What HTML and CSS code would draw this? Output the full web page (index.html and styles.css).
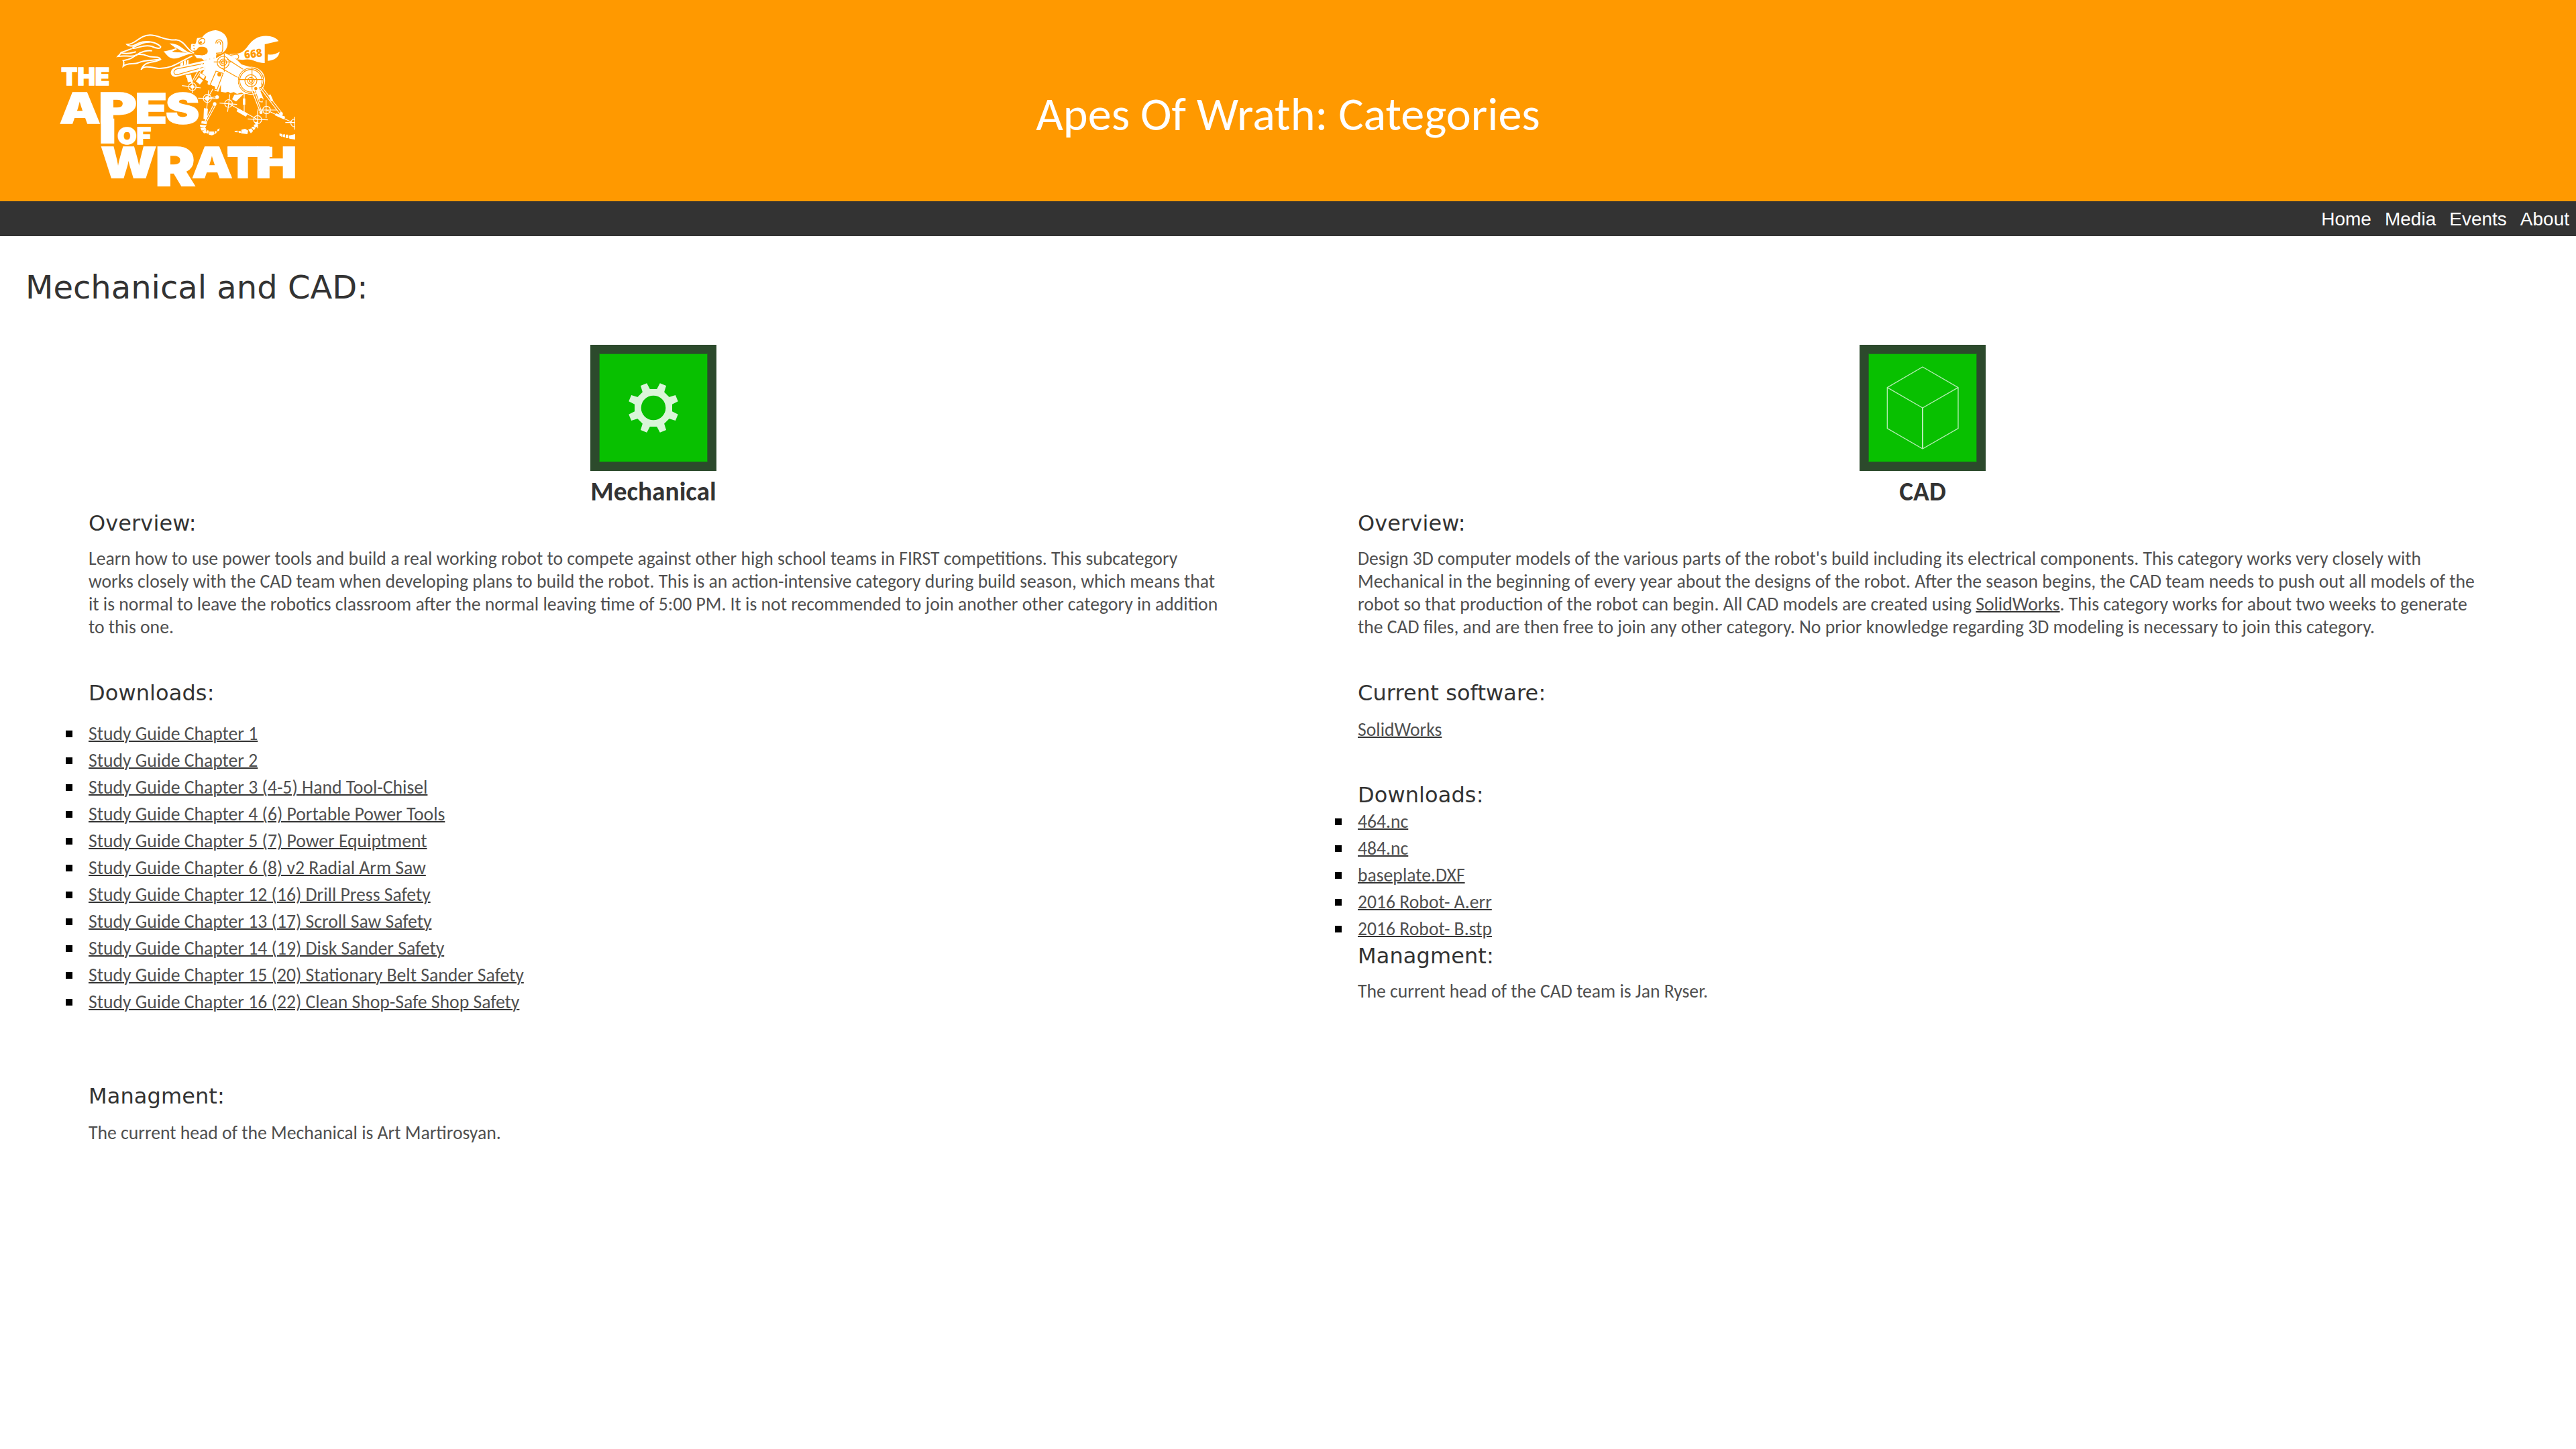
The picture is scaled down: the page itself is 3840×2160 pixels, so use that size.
FILE: index.html
```html
<!DOCTYPE html>
<html lang="en">
<head>
<meta charset="utf-8">
<title>Apes Of Wrath: Categories</title>
<link rel="stylesheet" href="styles.css">
</head>
<body>
<header class="banner">
  <svg class="logo" viewBox="0 0 1260 840" role="img" aria-label="The Apes of Wrath">
    <g class="word">
      <text x="94" y="321" font-size="107" textLength="216" lengthAdjust="spacingAndGlyphs">THE</text>
      <text x="86" y="493" font-size="190" textLength="183" lengthAdjust="spacingAndGlyphs">A</text>
      <text x="260" y="491" font-size="190" textLength="172" lengthAdjust="spacingAndGlyphs">P</text>
      <text x="424" y="493" font-size="184" textLength="144" lengthAdjust="spacingAndGlyphs">E</text>
      <text x="560" y="493" font-size="184" textLength="152" lengthAdjust="spacingAndGlyphs">S</text>
      <text x="346" y="584" font-size="104" textLength="150" lengthAdjust="spacingAndGlyphs">OF</text>
      <text x="270" y="736" font-size="190" textLength="250" lengthAdjust="spacingAndGlyphs">W</text>
      <text x="514" y="770" font-size="238" textLength="180" lengthAdjust="spacingAndGlyphs">R</text>
      <text x="678" y="736" font-size="190" textLength="182" lengthAdjust="spacingAndGlyphs">A</text>
      <text x="834" y="736" font-size="190" textLength="144" lengthAdjust="spacingAndGlyphs">T</text>
      <text x="962" y="736" font-size="190" textLength="186" lengthAdjust="spacingAndGlyphs">H</text>
    </g>
    <!-- long stem and joined crossbar -->
    <path class="fill" d="M271 470h60v112h-60zM838 596h200v46h-200z"/>
    <!-- flame breath -->
    <g class="line flame">
      <path d="M688 176C655 168 650 122 606 118C560 124 530 96 490 97C440 98 430 138 388 139C400 152 425 142 440 133C480 118 520 130 538 148C540 160 520 158 498 147C460 136 440 158 412 156"/>
      <path d="M412 152C440 146 450 126 490 128M410 157C395 162 375 172 362 174C358 184 350 188 347 192C380 186 400 196 428 188C450 170 480 164 500 167"/>
      <path d="M362 176C390 184 410 176 428 172M430 184C410 205 385 208 371 211C378 222 372 228 371 236C390 218 420 230 440 220C470 205 510 212 538 205C530 188 500 200 480 190C465 184 445 182 430 184"/>
      <path d="M538 205C510 225 470 206 451 252C462 232 490 240 530 246C590 248 625 215 680 190"/>
    </g>
    <path class="fill" d="M690 178C640 178 640 136 578 134C588 142 600 150 606 156C590 162 570 166 551 170C566 182 570 200 600 202C625 202 650 182 690 178z"/>
    <path class="hole" d="M658 176C630 172 620 160 600 150L612 160L590 170C610 176 630 174 658 176z"/>
    <!-- far arm and wrench -->
    <path class="fill" d="M845 182L880 180C925 172 925 135 962 113C995 92 1050 98 1066 124L1004 138V222C960 222 950 198 905 208L870 204z"/>
    <path class="fill" d="M1018 184C1040 186 1058 180 1071 171C1066 195 1050 210 1017 212z"/>
    <path class="cut" d="M850 187L878 183C892 186 890 204 876 205L862 201"/>
    <text class="number" x="912" y="198" font-size="50" textLength="80" lengthAdjust="spacingAndGlyphs" transform="rotate(-7 950 180)">668</text>
    <path class="fill" d="M735 211L606 240C575 250 578 284 606 284L735 252z"/>
    <path class="cut" d="M732 224L612 248C592 254 594 276 612 274L732 240"/>
    <path class="fill" d="M626 224l12-8l2 16l-14 5zM642 214l8-5l4 20l-12 3zM656 210l7-3v20l-6 3z"/>
    <path class="line thin" d="M726 220L676 310M738 228L690 300M668 276L680 318"/>
    <path class="fill" d="M650 276l24-2l2 10l-22 4zM656 286l20-4l4 22l-20 4zM716 266l22 14l-8 14l-18-14zM710 286l18 14l-14 18l-18-14z"/>
    <!-- torso -->
    <path class="fill" d="M734 210L790 198L826 178L850 188L880 208L900 228L940 240L992 262L1004 300L975 345L912 362L900 354L880 360L866 352L850 356L840 350L828 354L808 350V318L796 350L780 345L768 320L757 322L748 316L750 304L738 296L742 282L724 268L736 250z"/>
    <!-- head -->
    <path class="fill" d="M724 108C735 88 765 75 785 75C815 78 838 100 838 132C838 152 828 172 808 180L788 182L785 202L776 198L770 212L758 202L752 214L742 206L732 210L722 202L700 200L688 184C720 188 745 190 749 172C750 152 735 147 712 150C704 152 702 164 694 166L680 167L673 158C676 150 672 140 678 136L692 137C700 132 696 120 702 110z"/>
    <path class="cut" d="M706 130C712 110 735 105 736 122C736 134 722 142 708 136M785 134C786 114 812 112 816 134V162L812 176L786 178M792 134C798 120 808 126 806 140"/>
    <path class="hole" d="M690 184C710 176 720 164 732 152C752 156 750 190 720 187zM680 145l8-4l2 7zM683 158l8-3v6zM706 132l14-10l4 10l-12 5z"/>
    <!-- joints -->
    <g class="cut">
      <circle cx="818" cy="219" r="27"/><circle cx="818" cy="219" r="15"/><circle cx="818" cy="219" r="7"/>
      <path d="M776 217H860M823 180V260M836 204L914 254M808 244L890 290"/>
      <circle cx="942" cy="301" r="57"/><circle cx="942" cy="301" r="50"/><circle cx="942" cy="301" r="27"/><circle cx="942" cy="301" r="15"/><circle cx="942" cy="301" r="7"/>
      <path d="M886 296H996M947 244V352"/>
      <path d="M786 258L818 268L790 342L754 332z"/>
    </g>
    <circle class="line thin" cx="943" cy="301" r="61"/>
    <circle class="hole" cx="801" cy="273" r="9"/><circle class="hole" cx="773" cy="333" r="9"/>
    <g class="line thin">
      <circle cx="680" cy="328" r="17"/><path d="M634 323L718 333M680 300V356"/>
      <circle cx="747" cy="380" r="18"/><path d="M706 379L792 381M753 344L744 430M772 338L754 370M747 380L790 372"/>
      <circle cx="842" cy="403" r="17"/><path d="M802 401L880 407M838 440L848 362"/>
      <circle cx="1012" cy="432" r="17"/><path d="M970 432L1058 432M1010 468V388"/>
      <circle cx="972" cy="475" r="18"/><path d="M928 472L1018 476M972 436V514"/>
      <path d="M1138 472A17 17 0 0 0 1138 507M1096 488H1140M1138 462V520"/>
      <path d="M777 405L736 484M785 408L744 484M740 470L735 490M842 403L972 475M912 362V440"/>
      <path d="M942 334L984 442M952 330L990 440M984 334L1072 450M992 330L1080 444M1012 432L1128 488"/>
    </g>
    <g class="fill">
      <circle cx="680" cy="328" r="8"/><circle cx="747" cy="380" r="10"/>
      <path d="M868 364L910 360L876 394L858 384zM732 424L750 426L746 474L730 472zM884 424L928 448L920 462L878 438zM906 380h11v28h-11zM958 332L976 326L998 380L994 398L980 396zM1020 366l10-4l12 28l-10 4zM1054 446L1096 462L1090 474L1050 456z"/>
      <circle cx="791" cy="374" r="8"/><circle cx="780" cy="405" r="8"/><circle cx="980" cy="322" r="9"/><circle cx="987" cy="443" r="7"/><circle cx="1077" cy="449" r="8"/>
      <path d="M722 480L746 484L744 496L720 492zM714 498L744 500L738 510L716 508zM716 512l20-2l8 8l-22 6zM724 526l16-6l4 14l-12 2zM744 522l10 2l-2 14l-8-2zM756 528h20l4 12l-12 5l-14-3zM780 526l10 2l-4 10l-6-2zM792 520l10-6l-2 10l-8 4z"/>
      <path d="M868 526l14-2l2 8l-12-1zM886 526h10l2 8l-10 1zM900 520l16-4l14 8l-4 16l-28-4zM930 520l14-6l8 12l-10 10zM944 508l12-2l6 10l-8 6zM954 498l16-4l4 10l-14 8zM960 486l14-2l2 8l-14 4z"/>
      <path d="M1070 536l12 4l-2 12l-10-6zM1084 542l10-2l2 14l-12-2zM1098 542h10l2 16h-12zM1112 546l28-6v24l-26-4z"/>
    </g>
    <circle class="hole" cx="964" cy="336" r="7"/><circle class="hole" cx="988" cy="386" r="8"/>
  </svg>
  <h1 class="site-title">Apes Of Wrath: Categories</h1>
</header>
<nav class="menu">
  <a>Home</a><a>Media</a><a>Events</a><a>About</a>
</nav>
<main>
  <h2 class="section-title">Mechanical and CAD:</h2>
  <div class="categories">
    <section class="category">
      <svg class="tile" viewBox="0 0 564 564" aria-hidden="true">
        <rect class="tile-edge" width="564" height="564"/>
        <rect class="tile-face" x="40.5" y="40.5" width="483" height="483"/>
        <g class="gear" transform="translate(282 282)">
          <path fill-rule="evenodd" d="M-35-84H35L84-35V35L35 84H-35L-84 35V-35zM55 0A55 55 0 1 0-55 0A55 55 0 1 0 55 0z"/>
          <path id="tooth" transform="rotate(22.5)" d="M-18-80L-15-113H15L18-80z"/>
          <use href="#tooth" transform="rotate(45)"/><use href="#tooth" transform="rotate(90)"/><use href="#tooth" transform="rotate(135)"/><use href="#tooth" transform="rotate(180)"/><use href="#tooth" transform="rotate(225)"/><use href="#tooth" transform="rotate(270)"/><use href="#tooth" transform="rotate(315)"/>
        </g>
      </svg>
      <h3 class="category-name">Mechanical</h3>
      <h4>Overview:</h4>
      <p>Learn how to use power tools and build a real working robot to compete against other high school teams in FIRST competitions. This subcategory<br>works closely with the CAD team when developing plans to build the robot. This is an action-intensive category during build season, which means that<br>it is normal to leave the robotics classroom after the normal leaving time of 5:00 PM. It is not recommended to join another other category in addition<br>to this one.</p>
      <h4>Downloads:</h4>
      <ul class="guides">
        <li><a>Study Guide Chapter 1</a></li>
        <li><a>Study Guide Chapter 2</a></li>
        <li><a>Study Guide Chapter 3 (4-5) Hand Tool-Chisel</a></li>
        <li><a>Study Guide Chapter 4 (6) Portable Power Tools</a></li>
        <li><a>Study Guide Chapter 5 (7) Power Equiptment</a></li>
        <li><a>Study Guide Chapter 6 (8) v2 Radial Arm Saw</a></li>
        <li><a>Study Guide Chapter 12 (16) Drill Press Safety</a></li>
        <li><a>Study Guide Chapter 13 (17) Scroll Saw Safety</a></li>
        <li><a>Study Guide Chapter 14 (19) Disk Sander Safety</a></li>
        <li><a>Study Guide Chapter 15 (20) Stationary Belt Sander Safety</a></li>
        <li><a>Study Guide Chapter 16 (22) Clean Shop-Safe Shop Safety</a></li>
      </ul>
      <h4>Managment:</h4>
      <p class="short">The current head of the Mechanical is Art Martirosyan.</p>
    </section>
    <section class="category">
      <svg class="tile" viewBox="0 0 564 564" aria-hidden="true">
        <rect class="tile-edge" width="564" height="564"/>
        <rect class="tile-face" x="40.5" y="40.5" width="483" height="483"/>
        <path class="cube" d="M282 99L441 191V374L282 465L124 374V191zM124 191L282 282L441 191"/>
        <path class="cube post" d="M282 282V465"/>
      </svg>
      <h3 class="category-name">CAD</h3>
      <h4>Overview:</h4>
      <p>Design 3D computer models of the various parts of the robot's build including its electrical components. This category works very closely with<br>Mechanical in the beginning of every year about the designs of the robot. After the season begins, the CAD team needs to push out all models of the<br>robot so that production of the robot can begin. All CAD models are created using <a>SolidWorks</a>. This category works for about two weeks to generate<br>the CAD files, and are then free to join any other category. No prior knowledge regarding 3D modeling is necessary to join this category.</p>
      <h4>Current software:</h4>
      <p class="short"><a>SolidWorks</a></p>
      <h4>Downloads:</h4>
      <ul class="files">
        <li><a>464.nc</a></li>
        <li><a>484.nc</a></li>
        <li><a>baseplate.DXF</a></li>
        <li><a>2016 Robot- A.err</a></li>
        <li><a>2016 Robot- B.stp</a></li>
      </ul>
      <h4>Managment:</h4>
      <p>The current head of the CAD team is Jan Ryser.</p>
    </section>
  </div>
</main>
</body>
</html>
```
FILE: styles.css
```css
body {
  margin: 0;
  background: #fff;
  color: #333;
  font-family: Calibri, Carlito, Lato, sans-serif;
}
h1, h2, h3, h4, p, ul { margin: 0; padding: 0; }

.banner {
  display: grid;
  grid-template-columns: 420px 1fr 420px;
  height: 300px;
  padding: 0 60px;
  box-sizing: border-box;
  background: #f90;
}
.logo { width: 420px; height: 280px; margin-top: 20px; }
.site-title {
  padding-top: 127px;
  text-align: center;
  font-size: 70.2px;
  line-height: 86px;
  font-weight: 400;
  color: #fff;
}
.word { fill: #fff; stroke: #fff; stroke-width: 4; font-family: Inter, sans-serif; font-weight: 900; }
.fill { fill: #fff; }
.hole { fill: #f90; }
.line { fill: none; stroke: #fff; stroke-width: 6; }
.thin { stroke-width: 3.5; }
.cut { fill: none; stroke: #f90; stroke-width: 3.5; }
.number { fill: #f90; font-family: "Open Sans", sans-serif; font-weight: 800; }

.menu {
  display: flex;
  justify-content: flex-end;
  gap: 20px;
  height: 52px;
  padding-right: 10px;
  background: #333;
  color: #fff;
  font: 28px/54px "Liberation Sans", Arial, sans-serif;
}

.section-title {
  padding: 47px 0 0 38px;
  font: 400 48px/58px Verdana, "DejaVu Sans", sans-serif;
}
.categories {
  display: grid;
  grid-template-columns: 1684px 1684px;
  gap: 208px;
  padding: 57px 0 0 132px;
}
.tile { display: block; width: 188px; height: 188px; margin: 0 auto; }
.tile-edge { fill: #2c4a2c; }
.tile-face { fill: #08c000; stroke: #1b741b; stroke-width: 3; }
.gear { fill: #daf5d9; }
.cube { fill: none; stroke: #b5ecb2; stroke-width: 4; }
.post { stroke-width: 6; }

.category-name {
  padding: 8px 0 1px;
  text-align: center;
  font-size: 39.4px;
  line-height: 46px;
  font-weight: 700;
}
.category h4 {
  padding-top: 3px;
  font: 400 32px/40px Verdana, "DejaVu Sans", sans-serif;
  letter-spacing: 0.1px;
}
.category p {
  padding: 16px 0 58px;
  font-size: 27.66px;
  line-height: 34px;
  white-space: nowrap;
  color: #505050;
}
.category .short { padding: 18px 0 57px; }
.category a { color: #505050; text-decoration: underline #333 2px; }
.category ul { list-style: none; font-size: 27.66px; line-height: 40px; }
.guides { padding: 21px 0 97px; }
.files { margin-bottom: -3px; }
.category li { display: flex; align-items: center; gap: 24px; margin-left: -34px; }
.category li::before { content: ""; width: 10px; height: 10px; background: #000; }
```
